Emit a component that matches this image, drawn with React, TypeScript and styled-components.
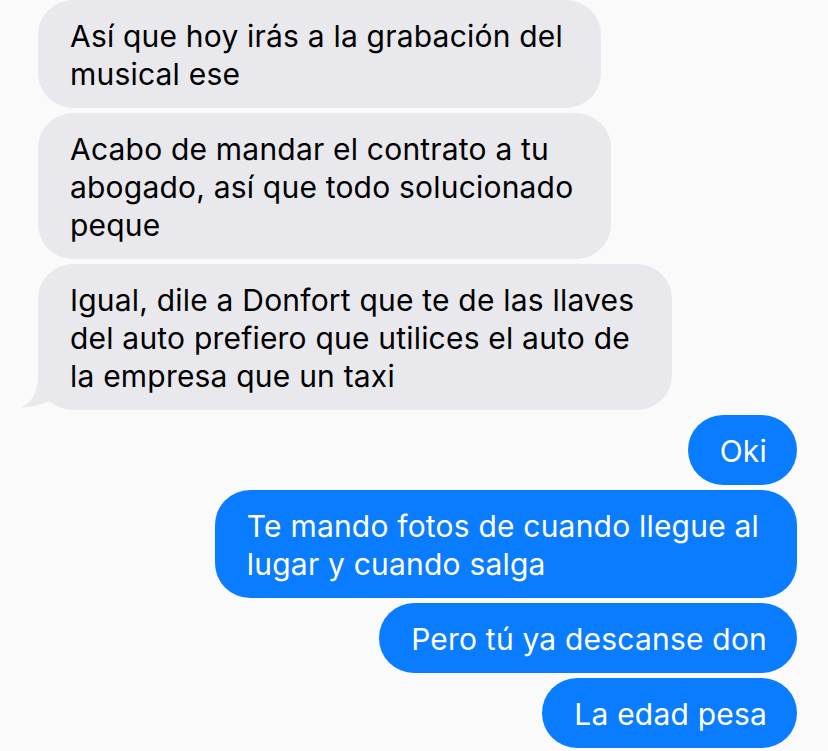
import React from "react";
import styled, { createGlobalStyle } from "styled-components";

const Global = createGlobalStyle`
  html, body { margin: 0; padding: 0; background: #fafafa; }
  body { font-family: Inter, "Noto Sans", "Liberation Sans", sans-serif; }
`;

const Thread = styled.div`
  display: flex;
  flex-direction: column;
  gap: 5px;
  padding: 0 31px 0 38px;
  width: 828px;
  box-sizing: border-box;
`;

const Bubble = styled.div<{ $mine?: boolean; $multi?: boolean }>`
  position: relative;
  align-self: ${(p) => (p.$mine ? "flex-end" : "flex-start")};
  background: ${(p) => (p.$mine ? "#0a7cff" : "#e9e8ed")};
  color: ${(p) => (p.$mine ? "#ffffff" : "#000000")};
  border-radius: 35px;
  padding: 17px ${(p) => (p.$multi ? "38px" : "30px")} 15px 32px;
  font-size: 30px;
  line-height: 38px;
  letter-spacing: 0.2px;
  white-space: nowrap;
`;

const Text = styled.span`
  position: relative;
  z-index: 1;
`;

const Tail = styled.svg`
  position: absolute;
  left: -18px;
  bottom: 0;
  width: 54px;
  height: 36px;
  z-index: 0;
`;

type Msg = { mine?: boolean; lines: string[]; tail?: boolean };

const messages: Msg[] = [
  { lines: ["Así que hoy irás a la grabación del", "musical ese"] },
  {
    lines: [
      "Acabo de mandar el contrato a tu",
      "abogado, así que todo solucionado",
      "peque",
    ],
  },
  {
    lines: [
      "Igual, dile a Donfort que te de las llaves",
      "del auto prefiero que utilices el auto de",
      "la empresa que un taxi",
    ],
    tail: true,
  },
  { mine: true, lines: ["Oki"] },
  { mine: true, lines: ["Te mando fotos de cuando llegue al", "lugar y cuando salga"] },
  { mine: true, lines: ["Pero tú ya descanse don"] },
  { mine: true, lines: ["La edad pesa"] },
];

export default function App() {
  return (
    <>
      <Global />
      <Thread>
        {messages.map((m, i) => (
          <Bubble key={i} $mine={m.mine} $multi={m.lines.length > 1}>
            {m.tail && (
              <Tail viewBox="0 0 54 36">
                <path
                  d="M18 0 C18 20 11 30 0 33 C9 34 20 31 29 27 C36 32 44 35 54 36 L54 0 Z"
                  fill="#e9e8ed"
                />
              </Tail>
            )}
            <Text>
              {m.lines.map((l, j) => (
                <React.Fragment key={j}>
                  {j > 0 && <br />}
                  {l}
                </React.Fragment>
              ))}
            </Text>
          </Bubble>
        ))}
      </Thread>
    </>
  );
}
